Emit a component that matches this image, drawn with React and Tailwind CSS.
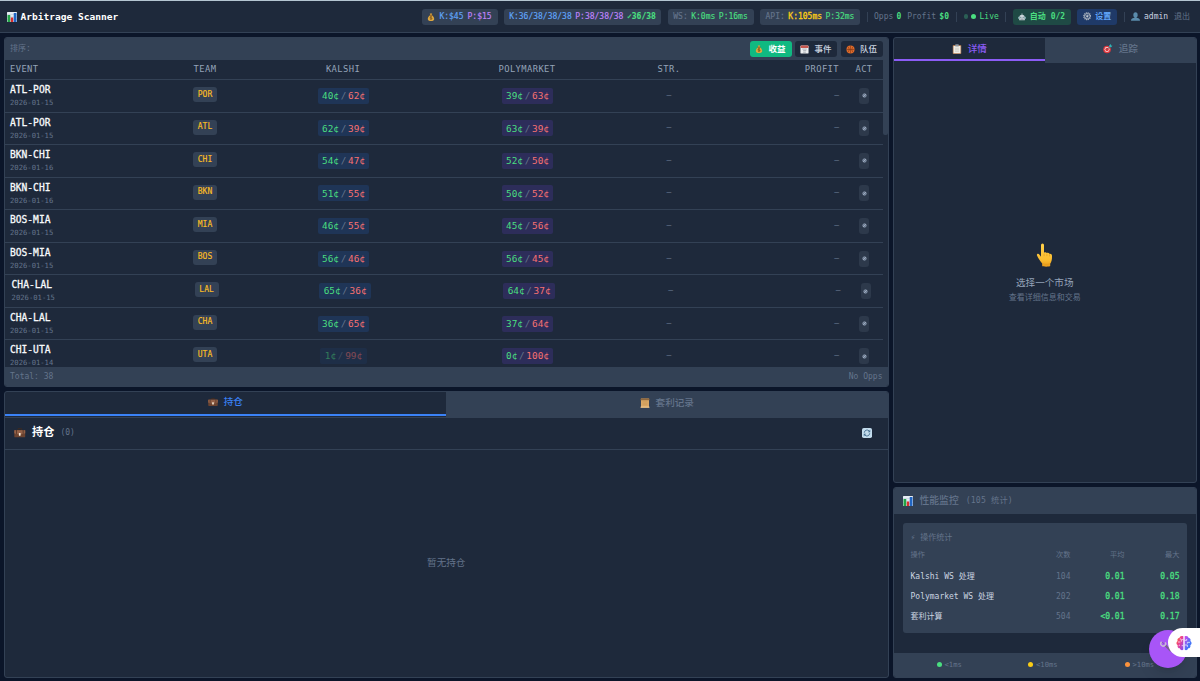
import React from "react";

const I = ({ s = 10, children, className = "" }) => (
  <svg width={s} height={s} viewBox="0 0 20 20" className={"shrink-0 " + className}>{children}</svg>
);
const Chart = ({ s }) => (
  <I s={s}>
    <rect width="20" height="20" rx="1" fill="#e8eef5" />
    <path d="M0 5h20M0 10h20M0 15h20" stroke="#b7c6d6" strokeWidth="1" />
    <rect x="1" y="6" width="5.500" height="14" fill="#22a447" />
    <rect x="7.500" y="11" width="5" height="9" fill="#d92d2d" />
    <rect x="13.500" y="2" width="5.500" height="18" fill="#2166c4" />
  </I>
);
const Bag = ({ s }) => (
  <I s={s}>
    <path d="M7 1h6l-1 4c4 3 6 7 6 10 0 4-3 5-8 5s-8-1-8-5c0-3 2-7 6-10z" fill="#dca63f" />
    <path d="M6.500 5.500h7" stroke="#7b4a17" strokeWidth="2" />
    <path d="M12.500 10c-1-1.300-5-1.300-5 .6 0 2.200 5 1 5 3.300 0 2-4 2-5.200.5M10 8.300v8.500" stroke="#6b4312" strokeWidth="1.500" fill="none" />
  </I>
);
const Calendar = ({ s }) => (
  <I s={s}>
    <rect x="1" y="1" width="18" height="18" rx="2" fill="#eef0f2" />
    <rect x="1" y="1" width="18" height="5.500" rx="2" fill="#c65850" />
    <path d="M5 9h10M7 12.500h7M7 16h6" stroke="#8b929b" strokeWidth="1.500" />
  </I>
);
const Ball = ({ s }) => (
  <I s={s}>
    <circle cx="10" cy="10" r="9" fill="#df6b2a" />
    <path d="M10 1v18M1 10h18M4 3.500c4 4 4 9 0 13M16 3.500c-4 4-4 9 0 13" stroke="#6b2c12" strokeWidth="1.100" fill="none" />
  </I>
);
const Clipboard = ({ s }) => (
  <I s={s}>
    <rect x="1.500" y="2" width="17" height="18" rx="1.500" fill="#a8744c" />
    <rect x="3" y="4" width="14" height="14.500" fill="#f1eee6" />
    <rect x="6.500" y="0.500" width="7" height="4.500" rx="1" fill="#8e959e" />
    <path d="M6 8.500h8M6 11.500h8M6 14.500h8" stroke="#b9b6ae" />
  </I>
);
const Target = ({ s }) => (
  <I s={s}>
    <circle cx="8.500" cy="11.500" r="8" fill="#e0383e" />
    <circle cx="8.500" cy="11.500" r="5.200" fill="#fbe9e9" />
    <circle cx="8.500" cy="11.500" r="3.800" fill="#e0383e" />
    <path d="M8.500 11.500l7-7" stroke="#44545e" strokeWidth="1.800" />
    <path d="M13 7V3l3.500-3 .5 3 3 .5-3 3.500z" fill="#2fb3b5" />
  </I>
);
const Briefcase = ({ s }) => (
  <I s={s}>
    <path d="M7 5V3h6v2" stroke="#3e2a20" strokeWidth="1.700" fill="none" />
    <rect x="0.500" y="5" width="19" height="13" rx="1.500" fill="#6b4330" />
    <path d="M.5 5.500h19v5.500c-5 2.500-14 2.500-19 0z" fill="#936047" />
    <rect x="3.500" y="5" width="1.300" height="7" fill="#4a3125" />
    <rect x="15.200" y="5" width="1.300" height="7" fill="#4a3125" />
    <rect x="8.500" y="10.500" width="3" height="4.500" rx=".6" fill="#fff3df" />
  </I>
);
const Scroll = ({ s }) => (
  <I s={s}>
    <rect x="2" y="1" width="16" height="18" fill="#d9a867" />
    <rect x="1" y="1" width="18" height="3.500" rx="1" fill="#8f673d" />
    <rect x="1" y="17" width="18" height="2.500" rx="1" fill="#efc68b" />
    <path d="M5 7.500h10M5 10.500h10M5 13.500h10" stroke="#c79450" />
  </I>
);
const Refresh = ({ s }) => (
  <I s={s}>
    <rect width="20" height="20" rx="3.500" fill="#c3dced" />
    <path d="M4.500 9.500A5.700 5.700 0 0 1 14.500 6M15.500 10.500A5.700 5.700 0 0 1 5.500 14" stroke="#456f91" strokeWidth="1.800" fill="none" />
    <path d="M16.500 3.500v5h-5zM3.500 16.500v-5h5z" fill="#456f91" />
  </I>
);
const Robot = ({ s }) => (
  <I s={s}>
    <path d="M10 5V1" stroke="#b9c6cc" strokeWidth="1.800" />
    <path d="M3 12a7 7.500 0 0 1 14 0v6H3z" fill="#cbd5da" />
    <rect x="0" y="9.500" width="3" height="5" fill="#74a3a8" />
    <rect x="17" y="9.500" width="3" height="5" fill="#74a3a8" />
    <circle cx="7" cy="10.500" r="1.300" fill="#3a5f67" />
    <circle cx="13" cy="10.500" r="1.300" fill="#3a5f67" />
    <path d="M6 15.500h8" stroke="#5a6a70" strokeWidth="1.600" />
  </I>
);
const Gear = ({ s }) => (
  <I s={s}>
    <circle cx="10" cy="10" r="8" fill="none" stroke="#aab4bf" strokeWidth="3" strokeDasharray="2.600 1.580" />
    <circle cx="10" cy="10" r="6.500" fill="none" stroke="#aab4bf" strokeWidth="2" />
    <path d="M10 4v12M4.800 7l10.400 6M4.800 13l10.400-6" stroke="#aab4bf" strokeWidth="1.200" />
    <circle cx="10" cy="10" r="2.200" fill="#c3cad2" />
  </I>
);
const Person = ({ s }) => (
  <I s={s}>
    <ellipse cx="10" cy="6.500" rx="4.800" ry="6" fill="#5a8bab" />
    <path d="M0 19.500c0-5 4-6 8-6.500V10h4v3c4 .5 8 1.500 8 6.500z" fill="#5a8bab" />
  </I>
);
const Finger = () => (
  <svg width="18" height="25" viewBox="0 0 18 25" className="shrink-0">
    <defs>
      <linearGradient id="skin" x1="0" y1="0" x2="0" y2="1">
        <stop offset="0" stopColor="#ffd04a" />
        <stop offset=".7" stopColor="#fbbd30" />
        <stop offset="1" stopColor="#e99a1b" />
      </linearGradient>
    </defs>
    <path d="M5 2.100a1.500 1.500 0 0 1 3 0V9.700c.9-.8 2.300-.6 2.800.3.900-.5 2.200-.2 2.600.8 1.400-.3 2.600.4 2.600 2 .1 3-.3 5.600-1.800 7.900v2.400c0 .8-8 .8-8 0v-2.500C4.400 18.500 2.300 15.500 1 12.600.4 11 2.300 10.200 3.300 11.500L5 13.800z" fill="url(#skin)" />
    <path d="M8.100 10.500v2.600M10.900 10.500v2.600M13.500 11.200v2.200M6.500 20.700c2.500.8 5 .8 7.500.1" stroke="#d98f17" strokeWidth=".5" fill="none" />
  </svg>
);
const Wrench = () => (
  <svg width="12" height="12" viewBox="0 0 12 12" className="shrink-0">
    <path d="M5.200 5.200L11 11" stroke="#77608f" strokeWidth="2.200" />
    <path d="M1.600 1.800A2.400 2.400 0 1 0 5.200 2.300" fill="none" stroke="#c9bdd4" strokeWidth="1.500" />
    <path d="M2.500 2.200l1.300 1.500" stroke="#77608f" strokeWidth="1" />
  </svg>
);
const Brain = () => (
  <svg width="16" height="16" viewBox="0 0 24 24" className="shrink-0">
    <defs>
      <linearGradient id="brainL" x1="0" y1="0" x2="1" y2="1">
        <stop offset="0" stopColor="#f97316" />
        <stop offset=".45" stopColor="#ec3f92" />
        <stop offset="1" stopColor="#7c4dff" />
      </linearGradient>
      <linearGradient id="brainR" x1="0" y1="0" x2="1" y2="1">
        <stop offset="0" stopColor="#d946ef" />
        <stop offset=".6" stopColor="#4a72f8" />
        <stop offset="1" stopColor="#2f7cf6" />
      </linearGradient>
    </defs>
    <path d="M11 2C8 .5 5.500 2 5.300 4.200 2.500 4.500 1.500 7 2.500 9 0 10.500 0 14 2.500 15.200 1.700 18 3.500 20 5.700 20c.8 3 4 3.500 5.300 1.800z" fill="url(#brainL)" />
    <path d="M13 2c3-1.500 5.500 0 5.700 2.200 2.800.3 3.800 2.800 2.800 4.800 2.500 1.500 2.500 5 0 6.200.8 2.800-1 4.800-3.200 4.800-.8 3-4 3.500-5.300 1.800z" fill="url(#brainR)" />
    <path d="M11 7H8v3M3 10.500h3.500M11 16H8.500M6 15l-2 1M6.500 5v2M13 8h3V6M13 15h4v3M21 11h-4v2" stroke="#fff" strokeWidth="1" fill="none" />
  </svg>
);

const rows = [
  ["ATL-POR", "2026-01-15", "POR", 40, 62, 39, 63],
  ["ATL-POR", "2026-01-15", "ATL", 62, 39, 63, 39],
  ["BKN-CHI", "2026-01-16", "CHI", 54, 47, 52, 50],
  ["BKN-CHI", "2026-01-16", "BKN", 51, 55, 50, 52],
  ["BOS-MIA", "2026-01-15", "MIA", 46, 55, 45, 56],
  ["BOS-MIA", "2026-01-15", "BOS", 56, 46, 56, 45],
  ["CHA-LAL", "2026-01-15", "LAL", 65, 36, 64, 37, "shift"],
  ["CHA-LAL", "2026-01-15", "CHA", 36, 65, 37, 64],
  ["CHI-UTA", "2026-01-14", "UTA", 1, 99, 0, 100, "dim"],
];

const cols = "grid grid-cols-[161px_78px_198px_170px_114px_119px_38px]";

const Price = ({ a, b, bg, dim }) => (
  <span className={`flex h-4 items-center rounded-xs px-[4.500px] text-[9.4px] ${bg} ${dim ? "opacity-45" : ""}`}>
    <span className="text-[#4ade80]">{a}¢</span>
    <span className="w-[9px] text-center text-[#64748b]">/</span>
    <span className="text-[#f87171]">{b}¢</span>
  </span>
);

const Row = ({ r }) => (
  <div className={`${cols} h-[32.55px] w-[878px] shrink-0 border-b border-[#334155] ${r[7] === "shift" ? "pl-[1.6px]" : ""}`}>
    <div className="flex flex-col pt-1 pl-[5px]">
      <span className="h-[12px] text-[9.6px] leading-[12px] text-[#f8fafc] [-webkit-text-stroke:0.3px]">{r[0]}</span>
      <span className="mt-px h-[11px] text-[7.200px] leading-[11px] text-[#64748b]">{r[1]}</span>
    </div>
    <div className="flex justify-center pt-[7px]">
      <span className="flex h-[15px] w-6 items-center justify-center rounded-[3px] bg-[#334155] text-[8px] text-[#fbbf24] [-webkit-text-stroke:0.15px]">{r[2]}</span>
    </div>
    <div className="flex items-center justify-center pl-px"><Price a={r[3]} b={r[4]} bg="bg-[#1f3557]" dim={r[7] === "dim"} /></div>
    <div className="flex items-center justify-center pl-px"><Price a={r[5]} b={r[6]} bg="bg-[#2d2d5a]" /></div>
    <div className="flex items-center justify-center text-[8px] text-[#64748b]">–</div>
    <div className="flex items-center justify-end pr-[6px] text-[8px] text-[#64748b]">–</div>
    <div className="flex items-center justify-center">
      <span className="flex h-4 w-[10px] items-center justify-center rounded-[3px] bg-[#2d394b]">
        <svg width="5" height="5" viewBox="0 0 5 5"><circle cx="2.500" cy="2.500" r="1.700" fill="#64748b" stroke="#94a3b8" strokeWidth=".8" /><path d="M1.300 3.700l2.400-2.400" stroke="#cbd5e1" strokeWidth=".6" /></svg>
      </span>
    </div>
  </div>
);

const chip = "flex h-4 shrink-0 items-center justify-center rounded-[3px] bg-[#334155] whitespace-nowrap [-webkit-text-stroke:0.15px]";
const Divider = () => <span className="h-[10px] w-px shrink-0 bg-[#334155]" />;
const sortBtn = "flex h-4 w-[42px] items-center justify-center gap-[5px] rounded-[3px] text-[8.500px]";

const ops = [
  ["Kalshi WS 处理", "104", "0.01", "0.05"],
  ["Polymarket WS 处理", "202", "0.01", "0.18"],
  ["套利计算", "504", "<0.01", "0.17"],
];
const opCols = "grid grid-cols-[110px_50px_54px_55px]";

export default function App() {
  return (
    <div className="relative flex h-[681px] w-[1200px] flex-col overflow-hidden bg-[#0b1529] font-['DejaVu_Sans_Mono','Noto_Sans_CJK_SC',monospace] text-[8px] leading-none">
      <div className="h-px shrink-0 bg-[#b4c5d1]" />
      <header className="flex h-8 shrink-0 items-center border-b border-[#334155] bg-[#1e293b] pr-[10px] pl-[7px]">
        <Chart s={10} />
        <h1 className="ml-[3.500px] text-[9.550px] font-bold text-white">Arbitrage Scanner</h1>
        <div className="ml-auto flex items-center gap-[6.500px]">
          <div className={`${chip} w-[76px] gap-[4px]`}>
            <Bag s={8} />
            <span className="text-[#60a5fa]">K:$45</span>
            <span className="text-[#c084fc]">P:$15</span>
          </div>
          <div className={`${chip} w-[157px] gap-[3.500px]`}>
            <span className="text-[#60a5fa]">K:36/38/38/38</span>
            <span className="text-[#c084fc]">P:38/38/38</span>
            <span className="font-bold text-[#4ade80]">✓36/38</span>
          </div>
          <div className={`${chip} w-[86px] gap-[3.500px]`}>
            <span className="text-[#64748b]">WS:</span>
            <span className="text-[#4ade80]">K:0ms</span>
            <span className="text-[#4ade80]">P:16ms</span>
          </div>
          <div className={`${chip} w-[100px] gap-[3.500px]`}>
            <span className="text-[#64748b]">API:</span>
            <span className="text-[#facc15] [-webkit-text-stroke:0.3px]">K:105ms</span>
            <span className="text-[#4ade80]">P:32ms</span>
          </div>
          <Divider />
          <div className="flex w-[75px] justify-between">
            <span className="text-[#64748b]">Opps <b className="ml-[-1.500px] text-[#4ade80]">0</b></span>
            <span className="text-[#64748b]">Profit <b className="ml-[-1.500px] text-[#4ade80]">$0</b></span>
          </div>
          <Divider />
          <div className="flex w-[35.500px] items-center">
            <span className="ml-[0.500px] size-[4.500px] shrink-0 rounded-full bg-[#2b5f55]" />
            <span className="ml-[2.500px] size-[5px] shrink-0 rounded-full bg-[#4ade80]" />
            <span className="ml-[4px] text-[#4ade80]">Live</span>
          </div>
          <Divider />
          <div className="flex h-4 w-[58px] items-center justify-center gap-[4px] rounded-[3px] bg-[#1f4a45] text-[#4ade80]">
            <Robot s={8} /><span className="font-bold whitespace-nowrap">自动 0/2</span>
          </div>
          <div className="flex h-4 w-[40px] items-center justify-center gap-[4px] rounded-[3px] bg-[#1f3a68] text-[#60a5fa]">
            <Gear s={8.5} /><span className="font-bold">设置</span>
          </div>
          <Divider />
          <div className="flex w-[59px] items-center">
            <Person s={9} />
            <span className="ml-[4px] text-[#cbd5e1]">admin</span>
            <span className="ml-auto text-[#64748b]">退出</span>
          </div>
        </div>
      </header>

      <main className="flex min-h-0 flex-1 gap-[4px] pt-[4px] pr-[3px] pb-[3px] pl-[4px]">
        <div className="flex w-[884.500px] shrink-0 flex-col gap-[3.500px]">
          <section className="flex h-[350px] shrink-0 flex-col overflow-hidden rounded-[3px] border border-[#334155] bg-[#1e293b]">
            <div className="flex h-[22px] shrink-0 items-center justify-between bg-[#334155] pr-[5px] pl-[5px]">
              <span className="text-[#64748b]">排序:</span>
              <div className="flex gap-[3.500px]">
                <span className={`${sortBtn} bg-[#10b981] font-bold text-white`}><Bag s={8} />收益</span>
                <span className={`${sortBtn} bg-[#1e293b] font-medium text-[#cbd5e1]`}><Calendar s={9} />事件</span>
                <span className={`${sortBtn} bg-[#1e293b] font-medium text-[#cbd5e1]`}><Ball s={9} />队伍</span>
              </div>
            </div>
            <div className="relative flex min-h-0 flex-1 flex-col overflow-hidden">
              <div className={`${cols} h-[20px] w-[878px] shrink-0 items-center border-b border-[#334155] text-[8.800px] tracking-[0.4px] text-[#94a3b8]`}>
                <span className="pl-[5px]">EVENT</span>
                <span className="text-center">TEAM</span>
                <span className="text-center">KALSHI</span>
                <span className="text-center">POLYMARKET</span>
                <span className="text-center">STR.</span>
                <span className="pr-[6px] text-right">PROFIT</span>
                <span className="text-center">ACT</span>
              </div>
              {rows.map((r, i) => <Row key={i} r={r} />)}
              <div className="absolute top-0 right-0 h-[75px] w-[5px] rounded-b-[2px] bg-[#334155]" />
            </div>
            <div className="flex h-[19.500px] shrink-0 items-center justify-between bg-[#334155] px-[5px] pt-[2px] text-[#64748b]">
              <span>Total: 38</span>
              <span>No Opps</span>
            </div>
          </section>

          <section className="flex min-h-0 flex-1 flex-col overflow-hidden rounded-[3px] border border-[#334155] bg-[#1e293b]">
            <div className="flex h-[25px] shrink-0 text-[9.600px] font-medium">
              <div className="flex h-[24px] w-[441px] items-center justify-center gap-[5.500px] border-b-2 border-[#3b82f6] pb-px text-[#3b82f6]"><Briefcase s={10} />持仓</div>
              <div className="flex flex-1 items-center justify-center gap-[6px] bg-[#334155] pb-[3px] text-[#64748b]"><Scroll s={10} />套利记录</div>
            </div>
            <div className="flex h-[33px] shrink-0 items-center border-t border-b border-[#334155] pr-[16px] pl-[9px]">
              <Briefcase s={11.5} />
              <span className="ml-[6.500px] text-[11.200px] font-bold text-white">持仓</span>
              <span className="ml-[6px] text-[#64748b]">(0)</span>
              <span className="ml-auto"><Refresh s={10} /></span>
            </div>
            <div className="flex flex-1 items-center justify-center text-[9.600px] text-[#64748b]">暂无持仓</div>
          </section>
        </div>

        <div className="flex min-w-0 flex-1 flex-col gap-[4px]">
          <section className="flex h-[446px] shrink-0 flex-col overflow-hidden rounded-[3px] border border-[#334155] bg-[#1e293b]">
            <div className="flex h-[24.500px] shrink-0 text-[9.600px] font-medium">
              <div className="flex h-[23px] w-[151.500px] items-center justify-center gap-[6px] border-b-2 border-[#8b5cf6] text-[#8b5cf6]"><Clipboard s={10} />详情</div>
              <div className="flex flex-1 items-center justify-center gap-[6px] bg-[#334155] pb-[3px] text-[#64748b]"><Target s={9.5} />追踪</div>
            </div>
            <div className="flex flex-1 flex-col items-center pt-[180px]">
              <Finger />
              <p className="mt-[9px] text-[9.600px] leading-[12px] text-[#94a3b8]">选择一个市场</p>
              <p className="mt-[4px] text-[8px] leading-[10px] text-[#64748b]">查看详细信息和交易</p>
            </div>
          </section>

          <section className="flex min-h-0 flex-1 flex-col overflow-hidden rounded-[3px] border border-[#334155] bg-[#1e293b]">
            <div className="flex h-[26px] shrink-0 items-center bg-[#334155] pb-px pl-[9px] text-[#64748b]">
              <Chart s={10} />
              <span className="ml-[7px] text-[9.800px] font-medium">性能监控</span>
              <span className="ml-[7px] text-[8.200px] tracking-[0.15px]">(105 统计)</span>
            </div>
            <div className="mx-[9px] mt-[9px] h-[110px] shrink-0 rounded-[3px] bg-[#334155] px-[8px] pt-[9px]">
              <div className="h-[11px] text-[8px] leading-[11px] text-[#64748b]">⚡︎ 操作统计</div>
              <div className={`${opCols} h-[24px] pt-[7.500px] text-[7.200px] leading-[8px] text-[#64748b]`}>
                <span>操作</span>
                <span className="text-right">次数</span>
                <span className="text-right">平均</span>
                <span className="text-right">最大</span>
              </div>
              {ops.map((o) => (
                <div key={o[0]} className={`${opCols} h-[20px] items-center text-[8px]`}>
                  <span className="whitespace-nowrap text-[#cbd5e1]">{o[0]}</span>
                  <span className="text-right text-[#64748b]">{o[1]}</span>
                  <span className="text-right text-[#4ade80] [-webkit-text-stroke:0.3px]">{o[2]}</span>
                  <span className="text-right text-[#4ade80] [-webkit-text-stroke:0.3px]">{o[3]}</span>
                </div>
              ))}
            </div>
            <div className="mt-auto flex h-[24px] shrink-0 items-center bg-[#334155] pl-[43px] text-[7.200px] text-[#64748b]">
              <span className="flex w-[91.500px] items-center gap-[3px]"><i className="size-[5px] rounded-full bg-[#4ade80]" />&lt;1ms</span>
              <span className="flex w-[96.500px] items-center gap-[3px]"><i className="size-[5px] rounded-full bg-[#facc15]" />&lt;10ms</span>
              <span className="flex items-center gap-[3px]"><i className="size-[5px] rounded-full bg-[#fb923c]" />&gt;10ms</span>
            </div>
          </section>
        </div>
      </main>

      <div className="absolute top-[630px] left-[1149px] size-[38px] rounded-full bg-[#a855f7] pt-[10px] pl-[11px] shadow-lg"><Wrench /></div>
      <div className="absolute top-[628px] left-[1168px] flex h-[29px] w-8 items-center rounded-l-full bg-white pl-[8px]"><Brain /></div>
    </div>
  );
}
